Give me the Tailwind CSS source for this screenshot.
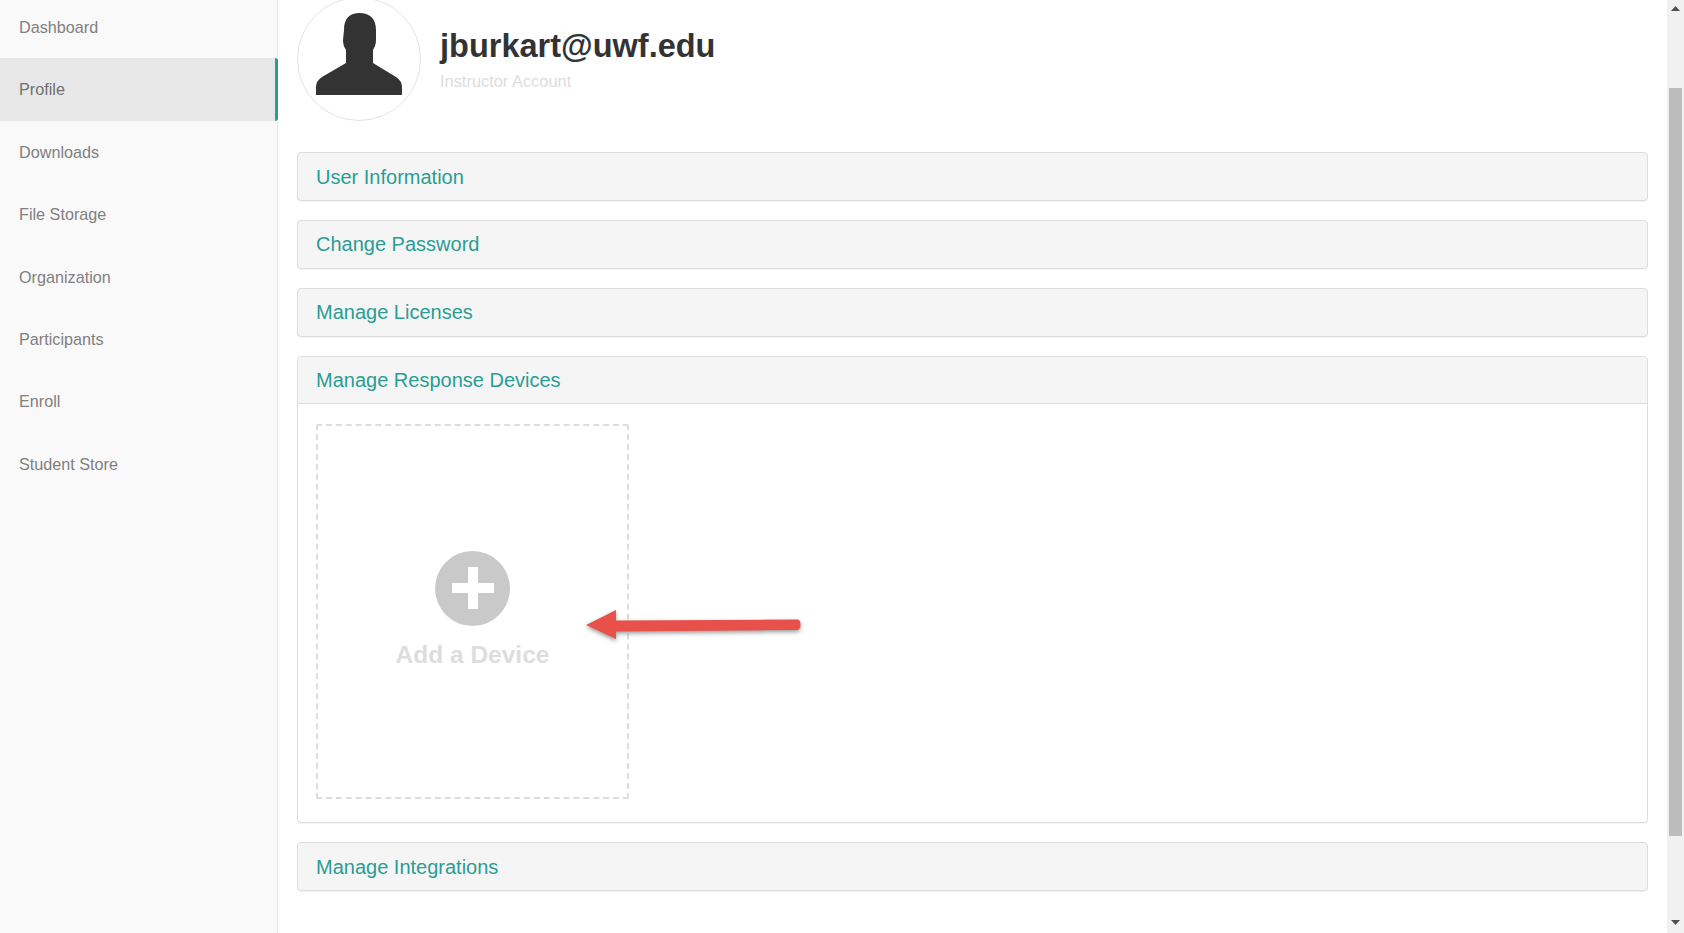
<!DOCTYPE html>
<html>
<head>
<meta charset="utf-8">
<script src="https://cdn.jsdelivr.net/npm/@tailwindcss/browser@4"></script>
</head>
<body class="bg-white overflow-hidden font-['Liberation_Sans',Arial,sans-serif]">
<div class="relative flex h-[933px] w-[1684px] overflow-hidden">
  <nav class="w-[278px] shrink-0 border-r border-[#e7e7e7] bg-[#f9f9f9] text-[16.2px] text-[#808080]">
    <div class="-mt-[4px]">
      <a class="flex h-[62.4px] items-center pl-[19px]">Dashboard</a>
      <a class="-mr-px flex h-[62.4px] items-center rounded-r-[3px] border-r-[3px] border-[#2a9d94] bg-[#e7e7e7] pl-[19px] text-[#707070]">Profile</a>
      <a class="flex h-[62.4px] items-center pl-[19px]">Downloads</a>
      <a class="flex h-[62.4px] items-center pl-[19px]">File Storage</a>
      <a class="flex h-[62.4px] items-center pl-[19px]">Organization</a>
      <a class="flex h-[62.4px] items-center pl-[19px]">Participants</a>
      <a class="flex h-[62.4px] items-center pl-[19px]">Enroll</a>
      <a class="flex h-[62.4px] items-center pl-[19px]">Student Store</a>
    </div>
  </nav>
  <main class="flex-1 pr-[19px] pl-[19px]">
    <div class="-mt-[4px] flex h-[125px] items-start">
      <div class="mt-px h-[124px] w-[124px] shrink-0 rounded-full border border-[#e3e3e3] bg-white">
        <svg class="-m-px h-[124px] w-[124px]" viewBox="297 -3 124 124">
          <path fill="#333" d="M344 30C344 18 350 13 359.5 13C369 13 376 18 376 30L376 40C376 45 374 48 373 50L373 63L396 77Q402 81 402 87L402 95L316 95L316 87Q316 81 322 77L346 63L346 50C344 47 343 44 343 40Z"/>
        </svg>
      </div>
      <div class="ml-[19px] pt-[27px]">
        <h1 class="text-[32.5px] leading-[46px] font-bold text-[#333]">jburkart@uwf.edu</h1>
        <p class="mt-[1px] text-[16.4px] leading-[22px] text-[#ddd]">Instructor Account</p>
      </div>
    </div>
    <div class="mt-[31px] flex flex-col gap-[19.3px]">
      <section class="flex h-[48.7px] items-center rounded-[4px] border border-[#ddd] bg-[#f5f5f5] pt-px pl-[18px] text-[20px] text-[#2a9d94] shadow-[0_1px_1px_rgba(0,0,0,0.05)]">User Information</section>
      <section class="flex h-[48.7px] items-center rounded-[4px] border border-[#ddd] bg-[#f5f5f5] pl-[18px] text-[20px] text-[#2a9d94] shadow-[0_1px_1px_rgba(0,0,0,0.05)]">Change Password</section>
      <section class="flex h-[48.7px] items-center rounded-[4px] border border-[#ddd] bg-[#f5f5f5] pl-[18px] text-[20px] text-[#2a9d94] shadow-[0_1px_1px_rgba(0,0,0,0.05)]">Manage Licenses</section>
      <section class="h-[467px] rounded-[4px] border border-[#ddd] bg-white shadow-[0_1px_1px_rgba(0,0,0,0.05)]">
        <div class="flex h-[47px] items-center rounded-t-[3px] border-b border-[#ddd] bg-[#f5f5f5] pl-[18px] text-[20px] text-[#2a9d94]">Manage Response Devices</div>
        <div class="pt-[20px] pl-[18px]">
          <div class="flex h-[375px] w-[313px] flex-col items-center rounded-[2px] border-2 border-dashed border-[#ddd] pt-[125px]">
            <div class="relative h-[75px] w-[75px] rounded-full bg-[#c9c9c9]">
              <div class="absolute top-[16px] left-[33px] h-[42px] w-[10px] bg-white"></div>
              <div class="absolute top-[32px] left-[17px] h-[10px] w-[42px] bg-white"></div>
            </div>
            <div class="mt-[15px] text-[24.5px] leading-[28px] font-bold text-[#ddd]">Add a Device</div>
          </div>
        </div>
      </section>
      <section class="flex h-[48.7px] items-center rounded-[4px] border border-[#ddd] bg-[#f5f5f5] pl-[18px] text-[20px] text-[#2a9d94] shadow-[0_1px_1px_rgba(0,0,0,0.05)]">Manage Integrations</section>
    </div>
  </main>
  <div class="flex w-[17px] shrink-0 flex-col items-center bg-[#f1f1f1]">
    <svg class="mt-[6px] h-[5px] w-[9px] shrink-0" viewBox="0 0 9 5"><path fill="#505050" d="M4.5 0L9 5L0 5Z"/></svg>
    <div class="mt-[77px] h-[748px] w-[13px] shrink-0 bg-[#bcbcbc]"></div>
    <svg class="mt-[84px] h-[5px] w-[9px] shrink-0" viewBox="0 0 9 5"><path fill="#505050" d="M0 0L9 0L4.5 5Z"/></svg>
  </div>
  <svg class="absolute top-[600px] left-[580px] h-[50px] w-[230px] drop-shadow-[0_2px_2px_rgba(0,0,0,0.4)]" viewBox="580 600 230 50">
    <path fill="#e8504a" d="M586 625L616 610L616 620.500L797 619.500Q800.500 619.500 800.500 624.500Q800.500 629.500 797 630L616 631.500L616 639Z"/>
  </svg>
</div>
</body>
</html>
